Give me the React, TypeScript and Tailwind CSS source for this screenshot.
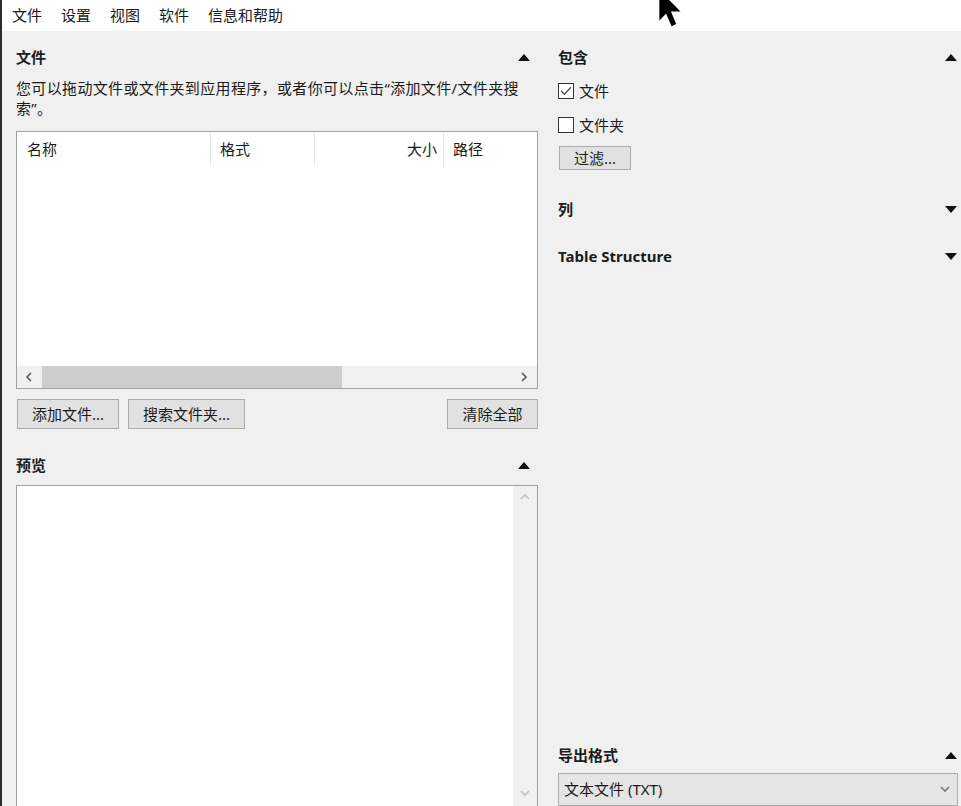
import React from 'react';

const font = "font-['Noto_Sans','Noto_Sans_CJK_SC',sans-serif]";

function Triangle({ up = true }: { up?: boolean }) {
  return (
    <svg width="12" height="7" viewBox="0 0 12 7" className="shrink-0">
      {up ? <path d="M0 7 L6 0 L12 7 Z" fill="#111" /> : <path d="M0 0 L12 0 L6 7 Z" fill="#111" />}
    </svg>
  );
}

function SectionHeader({ title, up = true, pr }: { title: string; up?: boolean; pr: string }) {
  return (
    <div className={`flex h-[28px] items-center justify-between font-bold ${pr}`}>
      <span className="leading-[28px]">{title}</span>
      <Triangle up={up} />
    </div>
  );
}

function Button({ label, w, h = 'h-[30px]' }: { label: string; w: string; h?: string }) {
  return (
    <div className={`flex ${h} ${w} items-center justify-center border border-[#adadad] bg-[#e1e1e1] leading-none`}>
      {label}
    </div>
  );
}

function Checkbox({ label, checked = false }: { label: string; checked?: boolean }) {
  return (
    <div className="flex h-[26px] items-center gap-[5px]">
      <div className="flex h-[16px] w-[16px] items-center justify-center border border-[#333] bg-white">
        {checked && (
          <svg width="12" height="10" viewBox="0 0 11 9">
            <path d="M1 4.5 L4 7.5 L10 1" fill="none" stroke="#555" strokeWidth="1.3" />
          </svg>
        )}
      </div>
      <span>{label}</span>
    </div>
  );
}

function Chevron({ dir, color = '#555' }: { dir: 'left' | 'right' | 'up' | 'down'; color?: string }) {
  const d = {
    left: 'M6 1 L2 5 L6 9',
    right: 'M2 1 L6 5 L2 9',
    up: 'M1 6 L5 2 L9 6',
    down: 'M1 2 L5 6 L9 2',
  }[dir];
  return (
    <svg width="10" height="10" viewBox="0 0 10 10">
      <path d={d} fill="none" stroke={color} strokeWidth="1.6" />
    </svg>
  );
}

export default function App() {
  return (
    <div className={`relative h-[806px] w-[961px] overflow-hidden border-l-2 border-[#2b2b2b] bg-[#f0f0f0] text-[15px] text-[#1b1b1b] ${font}`}>
      {/* menu bar */}
      <div className="flex h-[31px] items-center gap-[19px] bg-white pl-[10px] leading-none">
        <span>文件</span>
        <span>设置</span>
        <span>视图</span>
        <span>软件</span>
        <span>信息和帮助</span>
      </div>

      <div className="flex h-[775px] gap-[20px] pl-[14px] pr-[3px]">
        {/* left column */}
        <div className="flex w-[522px] flex-col pt-[12px]">
          <SectionHeader title="文件" pr="pr-[8px]" />
          <p className="mt-[7px] leading-[20px] tracking-[0.35px]">
            您可以拖动文件或文件夹到应用程序，或者你可以点击“添加文件/文件夹搜索”。
          </p>

          <div className="mt-[13px] flex h-[258px] flex-col border border-[#a0a0a0] bg-white">
            <div className="flex h-[34px] items-center">
              <div className="flex h-full w-[194px] items-center border-r border-[#e8e8e8] pl-[10px]">名称</div>
              <div className="flex h-full w-[104px] items-center border-r border-[#e8e8e8] pl-[9px]">格式</div>
              <div className="flex h-full w-[129px] items-center justify-end border-r border-[#e8e8e8] pr-[6px]">大小</div>
              <div className="flex h-full items-center pl-[9px]">路径</div>
            </div>
            <div className="flex-1" />
            <div className="flex h-[22px] items-center bg-[#f0f0f0]">
              <div className="flex h-full w-[25px] items-center justify-center">
                <Chevron dir="left" />
              </div>
              <div className="h-full w-[300px] bg-[#cdcdcd]" />
              <div className="flex-1" />
              <div className="flex h-full w-[25px] items-center justify-center">
                <Chevron dir="right" />
              </div>
            </div>
          </div>

          <div className="mt-[10px] flex items-center">
            <div className="ml-[1px]">
              <Button label="添加文件..." w="w-[102px]" />
            </div>
            <div className="ml-[9px]">
              <Button label="搜索文件夹..." w="w-[117px]" />
            </div>
            <div className="ml-auto">
              <Button label="清除全部" w="w-[91px]" />
            </div>
          </div>

          <div className="mt-[22px]">
            <SectionHeader title="预览" pr="pr-[8px]" />
          </div>

          <div className="mt-[6px] flex flex-1 justify-end border border-b-0 border-[#a0a0a0] bg-white">
            <div className="flex w-[24px] flex-col items-center justify-between bg-[#f0f0f0] py-[7px]">
              <Chevron dir="up" color="#c2c2c2" />
              <Chevron dir="down" color="#c2c2c2" />
            </div>
          </div>
        </div>

        {/* right column */}
        <div className="flex w-[400px] flex-col pt-[12px]">
          <SectionHeader title="包含" pr="pr-[1px]" />
          <div className="mt-[7px]">
            <Checkbox label="文件" checked />
          </div>
          <div className="mt-[8px]">
            <Checkbox label="文件夹" />
          </div>
          <div className="ml-[1px] mt-[8px]">
            <Button label="过滤..." w="w-[72px]" h="h-[24px]" />
          </div>
          <div className="mt-[25px]">
            <SectionHeader title="列" up={false} pr="pr-[1px]" />
          </div>
          <div className="mt-[19px]">
            <SectionHeader title="Table Structure" up={false} pr="pr-[1px]" />
          </div>

          <div className="mt-auto">
            <SectionHeader title="导出格式" pr="pr-[1px]" />
            <div className="mt-[4px] flex h-[33px] items-center justify-between border border-[#adadad] bg-[#e5e5e5] pl-[5px] pr-[7px]">
              <span>文本文件 (TXT)</span>
              <Chevron dir="down" color="#777" />
            </div>
          </div>
        </div>
      </div>

      {/* mouse pointer over the menu bar */}
      <svg className="absolute left-[657px] top-[-10px]" width="22" height="38" viewBox="0 0 12 20">
        <path d="M0.5 0.5 L0.5 15.5 L4 12 L7 19 L9 18 L6 11 L11 11 Z" fill="#000" stroke="#000" strokeWidth="0.6" />
      </svg>
    </div>
  );
}
